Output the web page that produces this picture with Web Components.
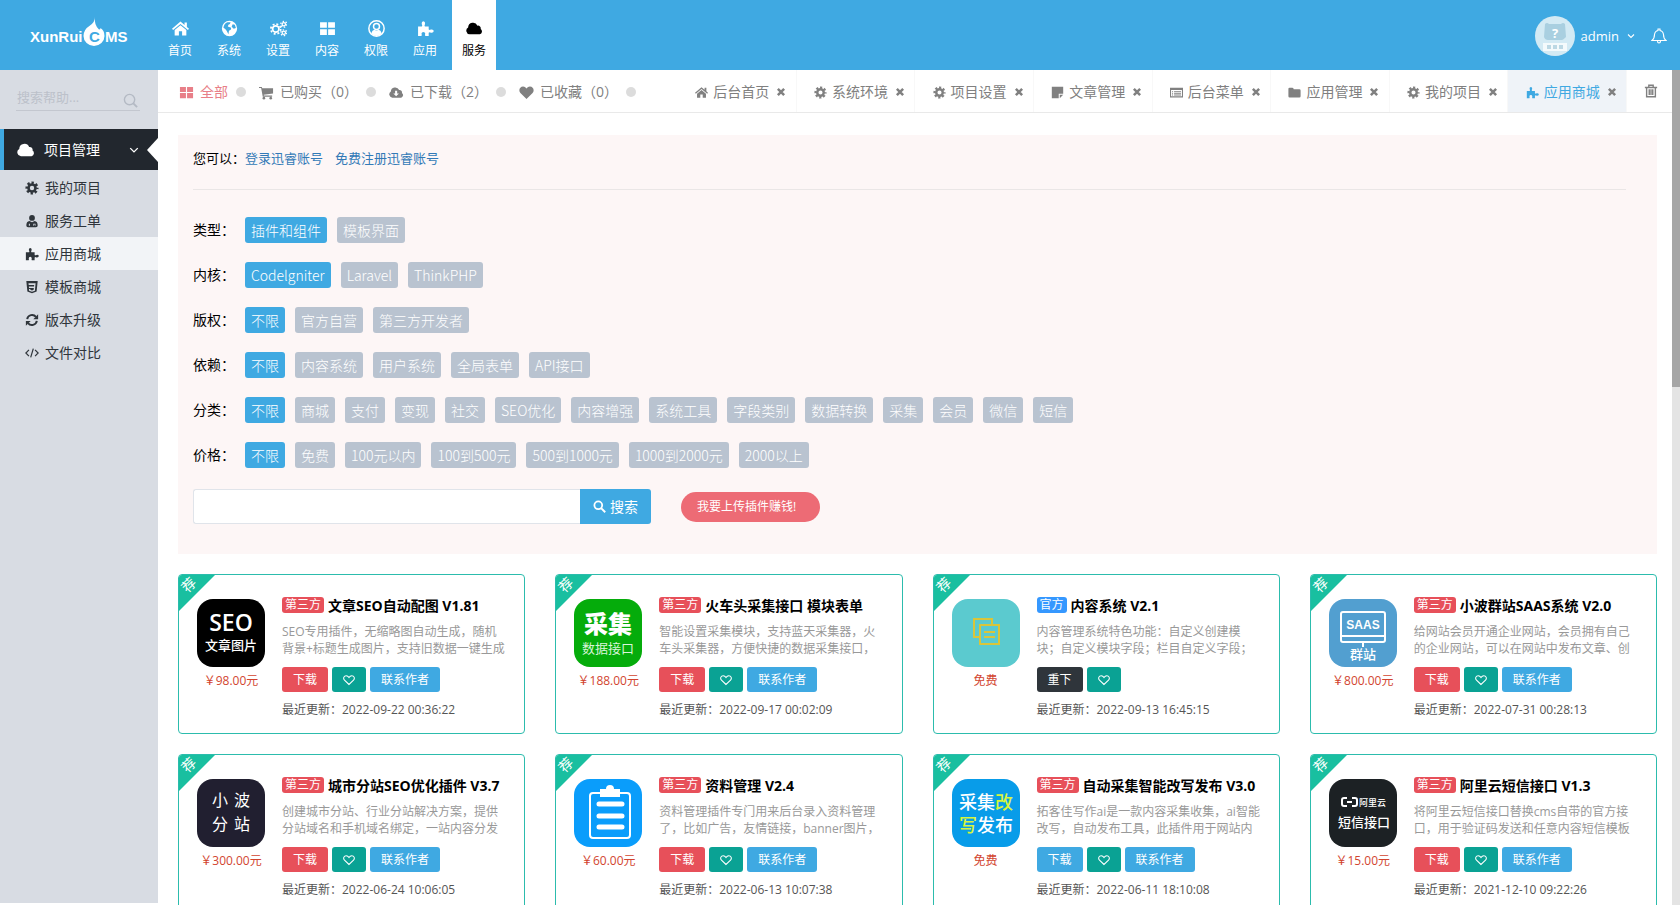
<!DOCTYPE html>
<html lang="zh-CN">
<head>
<meta charset="utf-8">
<title>应用商城</title>
<style>
html, body {
    height: 100%;
}
body {
    margin: 0;
    background: #fff;
    color: #000;
    font: 14px/20px "Open Sans", "Noto Sans CJK SC", sans-serif;
    overflow: hidden;
}
</style>
</head>
<body>
<admin-page>
    <top-bar slot="top" user="admin">
        <top-item icon="home">首页</top-item>
        <top-item icon="globe">系统</top-item>
        <top-item icon="cogs">设置</top-item>
        <top-item icon="grid">内容</top-item>
        <top-item icon="user">权限</top-item>
        <top-item icon="puzzle">应用</top-item>
        <top-item icon="cloud" active>服务</top-item>
    </top-bar>

    <side-bar slot="side" heading="项目管理">
        <side-item icon="cog">我的项目</side-item>
        <side-item icon="doctor">服务工单</side-item>
        <side-item icon="puzzle" active>应用商城</side-item>
        <side-item icon="css">模板商城</side-item>
        <side-item icon="refresh">版本升级</side-item>
        <side-item icon="code">文件对比</side-item>
    </side-bar>

    <tab-bar slot="tabs">
        <quick-link slot="links" icon="grid" active>全部</quick-link>
        <quick-link slot="links" icon="cart">已购买（0）</quick-link>
        <quick-link slot="links" icon="download">已下载（2）</quick-link>
        <quick-link slot="links" icon="heart">已收藏（0）</quick-link>
        <page-tab icon="home">后台首页</page-tab>
        <page-tab icon="cog">系统环境</page-tab>
        <page-tab icon="cog">项目设置</page-tab>
        <page-tab icon="note">文章管理</page-tab>
        <page-tab icon="list">后台菜单</page-tab>
        <page-tab icon="folder">应用管理</page-tab>
        <page-tab icon="cog">我的项目</page-tab>
        <page-tab icon="puzzle" active>应用商城</page-tab>
    </tab-bar>

    <filter-panel>
        <filter-row label="类型：" options="插件和组件,模板界面"></filter-row>
        <filter-row label="内核：" options="Codelgniter,Laravel,ThinkPHP"></filter-row>
        <filter-row label="版权：" options="不限,官方自营,第三方开发者"></filter-row>
        <filter-row label="依赖：" options="不限,内容系统,用户系统,全局表单,API接口"></filter-row>
        <filter-row label="分类：" options="不限,商城,支付,变现,社交,SEO优化,内容增强,系统工具,字段类别,数据转换,采集,会员,微信,短信"></filter-row>
        <filter-row label="价格：" options="不限,免费,100元以内,100到500元,500到1000元,1000到2000元,2000以上"></filter-row>
    </filter-panel>

    <card-grid>
        <plugin-card name="文章SEO自动配图 V1.81" price="￥98.00元" date="2022-09-22 00:36:22">
            <svg slot="art" viewBox="0 0 68 68" style="background:#000" fill="#fff" text-anchor="middle"><text x="34" y="32" font-size="23" font-weight="600">SEO</text><text x="34" y="51" font-size="13" font-weight="500">文章图片</text></svg>
            SEO专用插件，无缩略图自动生成，随机<br>背景+标题生成图片，支持旧数据一键生成
        </plugin-card>
        <plugin-card name="火车头采集接口 模块表单" price="￥188.00元" date="2022-09-17 00:02:09">
            <svg slot="art" viewBox="0 0 68 68" style="background:#05ac0b" fill="#fff" text-anchor="middle"><text x="34" y="34" font-size="24" font-weight="900">采集</text><text x="34" y="54" font-size="13" fill="#d9f5da">数据接口</text></svg>
            智能设置采集模块，支持蓝天采集器，火<br>车头采集器，方便快捷的数据采集接口，
        </plugin-card>
        <plugin-card kind="官方" name="内容系统 V2.1" price="免费" date="2022-09-13 16:45:15" action="重下">
            <svg slot="art" viewBox="0 0 68 68" style="background:#5bcacf" fill="none" stroke="#d9c53a" stroke-width="2"><path d="M27 38h-5V20h18v5M28 26h19v19H28zM32 33h11M32 38h11"/></svg>
            内容管理系统特色功能：自定义创建模<br>块；自定义模块字段；栏目自定义字段；
        </plugin-card>
        <plugin-card name="小波群站SAAS系统 V2.0" price="￥800.00元" date="2022-07-31 00:28:13">
            <svg slot="art" viewBox="0 0 68 68" style="background:#529fd0" fill="#fff" text-anchor="middle"><path d="M12 37V15q0-2 2-2h40q2 0 2 2v26q0 2-2 2H14q-2 0-2-2v-4h44M34 43v5" fill="none" stroke="#fff" stroke-width="2"/><text x="34" y="30" font-size="12" font-weight="700" font-family="Liberation Sans">SAAS</text><text x="34" y="60" font-size="13" font-weight="500">群站</text></svg>
            给网站会员开通企业网站，会员拥有自己<br>的企业网站，可以在网站中发布文章、创
        </plugin-card>
        <plugin-card name="城市分站SEO优化插件 V3.7" price="￥300.00元" date="2022-06-24 10:06:05">
            <svg slot="art" viewBox="0 0 68 68" style="background:#211f30" fill="#fff" text-anchor="middle" font-size="16"><text x="23" y="27">小</text><text x="45" y="27">波</text><text x="23" y="51">分</text><text x="45" y="51">站</text></svg>
            创建城市分站、行业分站解决方案，提供<br>分站域名和手机域名绑定，一站内容分发
        </plugin-card>
        <plugin-card name="资料管理 V2.4" price="￥60.00元" date="2022-06-13 10:07:38">
            <svg slot="art" viewBox="0 0 68 68" style="background:#0a9dfb" fill="none" stroke="#fff"><path d="M26 14h-7q-3 0-3 3v39q0 3 3 3h34q3 0 3-3V17q0-3-3-3h-7" stroke-width="2"/><path d="M26 18v-8h6q0-4 4-4t4 4h6v8z" fill="#fff" stroke="none"/><path d="M25 25h23M25 37h23M25 48h23" stroke-width="5" stroke-linecap="round"/></svg>
            资料管理插件专门用来后台录入资料管理<br>了，比如广告，友情链接，banner图片，
        </plugin-card>
        <plugin-card name="自动采集智能改写发布 V3.0" price="免费" date="2022-06-11 18:10:08" tone="blue">
            <svg slot="art" viewBox="0 0 68 68" style="background:#089ce9" fill="#fff" text-anchor="middle" font-size="18" font-weight="500"><text x="34" y="30">采集<tspan fill="#d8f53c">改</tspan></text><text x="34" y="53"><tspan fill="#d8f53c">写</tspan>发布</text></svg>
            拓客佳写作ai是一款内容采集收集，ai智能<br>改写，自动发布工具，此插件用于网站内
        </plugin-card>
        <plugin-card name="阿里云短信接口 V1.3" price="￥15.00元" date="2021-12-10 09:22:26">
            <svg slot="art" viewBox="0 0 68 68" style="background:#1c2124" fill="#fff"><path d="M18 19h-3q-2 0-2 2v4q0 2 2 2h3M23 19h3q2 0 2 2v4q0 2-2 2h-3M18 23h5" fill="none" stroke="#fff" stroke-width="2"/><text x="30" y="27" font-size="9" font-weight="500">阿里云</text><text x="9" y="48" font-size="13" font-weight="500">短信接口</text></svg>
            将阿里云短信接口替换cms自带的官方接<br>口，用于验证码发送和任意内容短信模板
        </plugin-card>
    </card-grid>
</admin-page>

<script>
const gearTeeth = '<circle cx="8" cy="8" r="6" fill="none" stroke="currentColor" stroke-width="3" stroke-dasharray="2.6 2.112" stroke-dashoffset="1.3"/><circle cx="8" cy="8" r="4" fill="none" stroke="currentColor" stroke-width="3"/>';

const icons = {
    home: '<path d="M8 1.5 0 8.3l1 1.2L8 3.7l7 5.8 1-1.2-2-1.7V2.3h-2.2v2.4zM8 5 2.5 9.5v5h4v-4h3v4h4v-5z"/>',
    globe: '<path fill-rule="evenodd" d="M8 .8a7.2 7.2 0 1 0 0 14.4A7.2 7.2 0 0 0 8 .8zM6 2l3 .2-.6 1.6L7 4.4 6.4 6l3.2 1.2-.4 2L7.5 10l-.5 3.5L5.3 10 4 8.5 2.3 7.2C2.5 4.8 4 2.7 6 2zm5 2 2 .5 1 3-2 .8-2-2z"/>',
    cogs: '<g transform="translate(0 3) scale(.68)"><circle cx="8" cy="8" r="4.4" fill="none" stroke="currentColor" stroke-width="2.4"/><circle cx="8" cy="8" r="6.8" fill="none" stroke="currentColor" stroke-width="2.4" stroke-dasharray="2.7 2.64"/></g><g fill="none" stroke="currentColor"><circle cx="13" cy="4" r="1.6" stroke-width="1.2"/><circle cx="13" cy="4" r="2.8" stroke-width="1.2" stroke-dasharray="1.4 1.53"/><circle cx="13" cy="12" r="1.6" stroke-width="1.2"/><circle cx="13" cy="12" r="2.8" stroke-width="1.2" stroke-dasharray="1.4 1.53"/></g>',
    grid: '<path d="M1 2h6.4v5.4H1zM8.6 2H15v5.4H8.6zM1 8.6h6.4V14H1zM8.6 8.6H15V14H8.6z"/>',
    user: '<circle cx="8" cy="8" r="7.2" fill="none" stroke="currentColor" stroke-width="1.4"/><circle cx="8" cy="6.2" r="2.8" fill="none" stroke="currentColor" stroke-width="1.4"/><path d="M3 12.6q1-3 3-3.4 2 1.4 4 0 2 .4 3 3.4A7 7 0 0 1 8 15a7 7 0 0 1-5-2.4z"/>',
    puzzle: '<path d="M1 6h3.6q.8-1-.2-2.2Q4.200 1.400 6 1.200q1.900.200 1.600 2.600Q6.600 5 7.400 6H11v3q1 .8 2 0 2.400-.6 2.800 1.400-.4 2-2.800 1.500-1-.9-2 0V15H7.800q-.6-1.200 0-2-.2-1.800-1.800-1.800T4.200 13q.6.800 0 2H1z"/>',
    cloud: '<path d="M3.500 13.500A3.500 3.500 0 0 1 2 7a4.600 4.600 0 0 1 8.800-1.700 2.600 2.600 0 0 1 3 3.200 2.800 2.800 0 0 1-.8 5z"/>',
    download: '<path fill-rule="evenodd" d="M3.500 13.500A3.500 3.500 0 0 1 2 7a4.600 4.600 0 0 1 8.800-1.700 2.600 2.600 0 0 1 3 3.200 2.800 2.800 0 0 1-.8 5zM6.500 6v3H4.600L7.600 12l3-3H8.700V6z"/>',
    cog: gearTeeth,
    doctor: '<circle cx="8" cy="4.500" r="3.300"/><path fill-rule="evenodd" d="M5 8 8 9.500 11 8q3.500.6 3.500 5 0 2-2 2h-9q-2 0-2-2Q1.500 8.600 5 8zm-.6 3v2.500h1.200V11zM9.500 11v2.500h.8v-1.500h.9v1.500h.8V11z"/>',
    css: '<path fill-rule="evenodd" d="M1.500 1h13l-1.200 12L8 15l-5.300-2zM4 3.800l.2 2h6.300l-.2 1.600H4.400l.2 1.800h5.500l-.2 2-1.900.7-1.900-.7-.1-.9H4.500l.2 2L8 13.500l3.300-1.200.8-8.500z"/>',
    refresh: '<path d="M2.500 7A5.600 5.600 0 0 1 12.500 4.500M13.500 9A5.600 5.600 0 0 1 3.500 11.500" fill="none" stroke="currentColor" stroke-width="2.200"/><path d="M15 1.500V7H9.500zM1 14.500V9h5.500z"/>',
    code: '<path d="M4.500 4.500 1 8l3.500 3.500M11.500 4.500 15 8l-3.500 3.500M9.500 3l-3 10" fill="none" stroke="currentColor" stroke-width="1.400"/>',
    cart: '<path d="M0 2h3l.5 1.500H15V9L5 10.300l.2 1H14v1.200H4L2.300 3.300H0z"/><circle cx="5.200" cy="14" r="1.400"/><circle cx="12.500" cy="14" r="1.400"/>',
    heart: '<path d="M8 14.800 1.500 8.500C-1 5.500 1 1.500 4.300 1.500 6.300 1.500 7.400 2.800 8 3.800c.6-1 1.700-2.300 3.700-2.300 3.300 0 5.300 4 2.800 7z"/>',
    hearto: '<path d="M8 14 2 8.200C-.4 5.400 1.500 2.300 4.300 2.300 6.300 2.300 7.400 3.800 8 4.800c.6-1 1.700-2.500 3.700-2.500 2.800 0 4.700 3.100 2.300 5.900z" fill="none" stroke="currentColor" stroke-width="1.400"/>',
    note: '<path d="M1 1h14v8.500H9.500V15H1zM10.800 10.800H15L10.800 15z"/>',
    list: '<path fill-rule="evenodd" d="M0 2h16v12H0zm1.300 3v7.700h13.400V5z"/><path d="M2.500 6h1.300v1.200H2.500zM5 6h8.500v1.200H5zM2.500 8.300h1.300v1.200H2.500zM5 8.300h8.500v1.200H5zM2.500 10.600h1.300v1.200H2.500zM5 10.600h8.500v1.200H5z"/>',
    folder: '<path d="M.5 3.500Q.5 2 2 2h3.500Q7 2 7 4h7q1.500 0 1.500 1.500v7Q15.500 14 14 14H2q-1.500 0-1.500-1.500z"/>',
    times: '<path d="m3 3 10 10M13 3 3 13" fill="none" stroke="currentColor" stroke-width="4"/>',
    trash: '<path d="M1 4h14M5.500 4V1.500h5V4M3 4v10.500h10V4M6 6v6.500M8 6v6.500M10 6v6.500" fill="none" stroke="currentColor" stroke-width="1.600"/>',
    search: '<circle cx="6.500" cy="6.500" r="4.800" fill="none" stroke="currentColor" stroke-width="2.200"/><path d="m10 10 5 5" stroke="currentColor" stroke-width="2.400"/>',
    lens: '<circle cx="7" cy="7" r="5.500" fill="none" stroke="currentColor" stroke-width="1.500"/><path d="m11 11 4 4" stroke="currentColor" stroke-width="2"/>',
    down: '<path d="m2 5 6 6 6-6" fill="none" stroke="currentColor" stroke-width="2.200"/>',
    bell: '<path d="M1 12.500q2.500-2 2.500-6Q4 3 7 2.500V1h2v1.500q3 .5 3.500 4 0 4 2.500 6zM6.500 13q0 2 1.500 2t1.500-2" fill="none" stroke="currentColor" stroke-width="1.100"/>'
};

function icon(name, size = 14) {
    return `<svg width="${size}" height="${size}" viewBox="0 0 16 16" fill="currentColor" aria-hidden="true">${icons[name]}</svg>`;
}

// every element renders its markup once, from its attributes
class BaseElement extends HTMLElement {
    constructor() {
        super();
        this.root = this.attachShadow({ mode: 'open' });
    }

    connectedCallback() {
        this.root.innerHTML = `<style>
            * { box-sizing: border-box; }
            a { color: inherit; text-decoration: none; }
            button, input { font: inherit; color: inherit; border: 0; margin: 0; padding: 0; background: none; }
            button { cursor: pointer; }
            svg { flex: none; }
        </style>` + this.render();
    }
}

class AdminPage extends BaseElement {
    render() {
        return `<style>
            :host { display: flex; flex-direction: column; height: 100vh; }
            .body { display: flex; flex: 1; min-height: 0; }
            .main { flex: 1; min-width: 0; display: flex; flex-direction: column; }
            main { flex: 1; min-height: 0; overflow: hidden; padding: 22px 15px 0 20px; }
            .scroll { width: 8px; background: #e4e4e4; }
            .thumb { height: 38%; background: #a6a6a6; }
        </style>
        <slot name="top"></slot>
        <div class="body">
            <slot name="side"></slot>
            <div class="main">
                <slot name="tabs"></slot>
                <main><slot></slot></main>
            </div>
            <div class="scroll"><div class="thumb"></div></div>
        </div>`;
    }
}

class TopBar extends BaseElement {
    render() {
        return `<style>
            :host { display: flex; height: 70px; flex: none; background: #3fa9e2; color: #fff; }
            .logo { width: 158px; flex: none; padding: 16px 0 0 30px; }
            nav { display: flex; gap: 5px; flex: 1; }
            .user { display: flex; align-items: center; padding: 2px 13px 0 0; font-size: 13px; }
            .user button { display: flex; align-items: center; gap: 6px; }
            .user button + button { margin-left: 16px; }
            .user span { margin-right: 2px; }
        </style>
        <a class="logo" href="#" aria-label="XunRuiCMS">
            <svg width="100" height="32" viewBox="0 0 100 32" fill="#fff" font-family="Liberation Sans" font-weight="700" font-size="15">
                <text x="0" y="26">XunRui</text>
                <path d="M65 1q0 5-5 8.500-6.500 4-6.500 10.500a10.500 10 0 0 0 21 0q0-5.500-4-8 .2 1.500-1.500 1.500Q64 9 65 1z"/>
                <text x="59" y="26" fill="#3fa9e2">C</text>
                <text x="75" y="26">MS</text>
            </svg>
        </a>
        <nav><slot></slot></nav>
        <div class="user">
            <button>
                <svg width="40" height="40" viewBox="0 0 40 40">
                    <circle cx="20" cy="20" r="20" fill="#d3eaf4"/>
                    <path d="M10 8q2-2 4 0h12q2-2 4 0l1 13q-3 3-4 3H13q-3 0-4-3z" fill="#a9cfe0"/>
                    <text x="20" y="22" font-size="13" font-weight="700" fill="#fff" text-anchor="middle">?</text>
                    <path d="M8 27h24v8H8z" fill="#f4fafc"/>
                    <path d="M12 29h4v4h-4zM18 29h4v4h-4zM24 29h4v4h-4z" fill="#bcd8e4"/>
                </svg>
                <span>${this.getAttribute('user')}</span>${icon('down', 8)}
            </button>
            <button aria-label="通知">${icon('bell', 16)}</button>
        </div>`;
    }
}

class TopItem extends BaseElement {
    render() {
        return `<style>
            a { display: flex; flex-direction: column; align-items: center; gap: 4px; height: 70px; padding: 20px 10px 0; font-size: 12px; }
            :host([active]) a { background: #fff; color: #000; }
        </style>
        <a href="#">${icon(this.getAttribute('icon'), 17)}<slot></slot></a>`;
    }
}

class SideBar extends BaseElement {
    render() {
        return `<style>
            :host { display: block; width: 158px; flex: none; margin-bottom: 2px; background: #d8dce3; color: #2f353b; }
            form { display: flex; align-items: center; margin: 14px 18px 18px 16px; height: 27px; border-bottom: 1px solid #c3c7cf; color: #b4bac4; }
            input { flex: 1; min-width: 0; padding-left: 1px; font-size: 13px; outline: 0; }
            input::placeholder { color: #bcc1ca; opacity: 1; }
            form button { display: flex; margin: 6px 2px 0 0; }
            .head { display: flex; align-items: center; gap: 9px; width: 100%; height: 41px; padding-left: 13px; border-left: 4px solid #3fa9e2; background: #22272e; color: #fff; }
            .head span { flex: 1; text-align: left; }
            .arrow { border: 12px solid transparent; border-left: 0; border-right: 11px solid #fff; margin-left: -1px; }
            nav { padding-top: 1px; }
        </style>
        <form>
            <input type="text" placeholder="搜索帮助..." aria-label="搜索帮助">
            <button type="button" aria-label="搜索">${icon('lens', 15)}</button>
        </form>
        <button class="head">${icon('cloud', 18)}<span>${this.getAttribute('heading')}</span>${icon('down', 10)}<i class="arrow"></i></button>
        <nav><slot></slot></nav>`;
    }
}

class SideItem extends BaseElement {
    render() {
        return `<style>
            a { display: flex; align-items: center; gap: 6px; height: 33px; padding: 1px 0 0 25px; }
            :host([active]) a { background: #f2f4f7; }
        </style>
        <a href="#">${icon(this.getAttribute('icon'), 14)}<slot></slot></a>`;
    }
}

class TabBar extends BaseElement {
    render() {
        return `<style>
            :host { display: flex; flex: none; height: 43px; box-sizing: border-box; border-bottom: 1px solid #e9e9e9; color: #808080; }
            .links { display: flex; flex: 1; padding-left: 21px; }
            .tabs { display: grid; grid-template-columns: repeat(8, 1fr); flex: 0 1 949px; }
            .trash { width: 45px; padding: 4px 0 0 3px; }
        </style>
        <nav class="links"><slot name="links"></slot></nav>
        <nav class="tabs"><slot></slot></nav>
        <button class="trash" aria-label="关闭全部">${icon('trash', 14)}</button>`;
    }
}

class QuickLink extends BaseElement {
    render() {
        return `<style>
            :host { display: flex; align-items: center; padding-top: 2px; }
            :host([active]) a { color: #e87f88; }
            a { display: flex; align-items: center; gap: 6px; }
            i { width: 10px; height: 10px; margin: 0 13px 0 8px; border-radius: 50%; background: #dcdcdc; }
        </style>
        <a href="#">${icon(this.getAttribute('icon'), 15)}<slot></slot></a><i></i>`;
    }
}

class PageTab extends BaseElement {
    render() {
        return `<style>
            :host { display: flex; align-items: center; justify-content: center; gap: 7px; padding: 2px 0 0 8px; border-right: 1px solid #f8f8f8; }
            :host([active]) { background: #eff3f8; }
            :host([active]) a { color: #3fa9e2; }
            a { display: flex; align-items: center; gap: 5px; }
            button { display: flex; }
        </style>
        <a href="#">${icon(this.getAttribute('icon'), 13)}<slot></slot></a>
        <button aria-label="关闭">${icon('times', 10)}</button>`;
    }
}

class FilterPanel extends BaseElement {
    render() {
        return `<style>
            :host { display: block; padding: 13px 15px 30px; margin-bottom: 20px; background: #fdf6f6; }
            p { margin: 0; font-size: 13px; }
            p a { color: #337ab7; margin-right: 12px; }
            hr { margin: 21px 16px 27px 0; border: 0; border-top: 1px solid #eae6e6; }
            form { display: flex; align-items: center; margin-top: 21px; }
            input { width: 387px; height: 35px; padding: 0 12px; border: 1px solid #e0e4ea; border-right: 0; border-radius: 3px 0 0 3px; background: #fff; }
            .search { display: flex; align-items: center; gap: 4px; height: 35px; padding: 0 13px; border-radius: 0 3px 3px 0; background: #3fa9e2; color: #fff; }
            .upload { margin-left: 30px; padding: 5px 24px 5px 16px; border-radius: 15px; background: #ed6b75; color: #fff; font-size: 12px; }
            .rows { display: flex; flex-direction: column; gap: 19px; }
        </style>
        <p>您可以：<a href="#">登录迅睿账号</a><a href="#">免费注册迅睿账号</a></p>
        <hr>
        <div class="rows"><slot></slot></div>
        <form>
            <input type="text" aria-label="关键字">
            <button type="button" class="search">${icon('search', 13)}搜索</button>
            <a class="upload" href="#">我要上传插件赚钱!</a>
        </form>`;
    }
}

class FilterRow extends BaseElement {
    render() {
        const tags = this.getAttribute('options').split(',')
            .map((text, i) => `<a href="#" class="${i ? '' : 'on'}">${text}</a>`).join('');
        return `<style>
            :host { display: flex; align-items: center; }
            .label { width: 52px; }
            .tags { display: flex; flex-wrap: wrap; gap: 10px; font-family: "Noto Sans CJK SC", sans-serif; font-weight: 300; }
            a { height: 26px; padding: 0 6px; line-height: 26px; border-radius: 3px; background: #b9c3d0; color: #fff; }
            a.on { background: #3fa9e2; }
        </style>
        <span class="label">${this.getAttribute('label')}</span>
        <div class="tags">${tags}</div>`;
    }
}

class CardGrid extends BaseElement {
    render() {
        return `<style>
            :host { display: grid; grid-template-columns: repeat(4, 1fr); gap: 20px 30px; }
        </style>
        <slot></slot>`;
    }
}

class PluginCard extends BaseElement {
    render() {
        const official = this.getAttribute('kind') === '官方';
        const tone = official ? 'dark' : this.getAttribute('tone') || 'red';
        return `<style>
            :host { position: relative; display: flex; gap: 17px; height: 160px; padding: 22px 14px 0 18px; border: 1px solid #2cbcad; border-radius: 4px; box-sizing: border-box; font-size: 12px; line-height: 17px; }
            .ribbon { position: absolute; left: 0; top: 0; padding: 3px; color: #fff; font-size: 14px; line-height: 14px; }
            .ribbon svg { position: absolute; left: 0; top: 0; }
            .ribbon span { position: relative; display: block; width: 14px; height: 14px; transform: rotate(-45deg); }
            .left { width: 68px; flex: none; display: flex; flex-direction: column; align-items: center; padding-top: 2px; gap: 5px; white-space: nowrap; color: #d2452f; }
            ::slotted(svg) { width: 68px; height: 68px; border-radius: 16px; }
            .right { flex: 1; min-width: 0; white-space: nowrap; }
            h3 { display: flex; align-items: center; gap: 4px; margin: 0; height: 16px; font-size: 14px; font-weight: 700; }
            .kind { padding: 0 3px; border-radius: 3px; background: #e7505a; color: #fff; font-size: 12px; line-height: 16px; font-weight: 400; }
            .kind.official { background: #3598ff; }
            p { margin: 10px 0; color: #999; }
            .buttons { display: flex; gap: 4px; }
            .buttons button { display: flex; align-items: center; height: 25px; padding: 0 11px; border-radius: 3px; color: #fff; }
            button.red { background: #e7505a; }
            button.dark { background: #2f353b; }
            button.blue { background: #3fa9e2; }
            button.like { background: #0aa294; }
            .date { margin-top: 9px; color: #555; }
        </style>
        <div class="ribbon">
            <svg width="36" height="36" viewBox="0 0 36 36" fill="#19bfa0"><path d="M3 0h33L0 36V3q0-3 3-3z"/></svg>
            <span>荐</span>
        </div>
        <div class="left"><slot name="art"></slot><span>${this.getAttribute('price')}</span></div>
        <div class="right">
            <h3><span class="kind ${official ? 'official' : ''}">${this.getAttribute('kind') || '第三方'}</span>${this.getAttribute('name')}</h3>
            <p><slot></slot></p>
            <div class="buttons">
                <button class="${tone}">${this.getAttribute('action') || '下载'}</button>
                <button class="like" aria-label="收藏">${icon('hearto', 12)}</button>
                ${official ? '' : '<button class="blue">联系作者</button>'}
            </div>
            <div class="date">最近更新：${this.getAttribute('date')}</div>
        </div>`;
    }
}

customElements.define('admin-page', AdminPage);
customElements.define('top-bar', TopBar);
customElements.define('top-item', TopItem);
customElements.define('side-bar', SideBar);
customElements.define('side-item', SideItem);
customElements.define('tab-bar', TabBar);
customElements.define('quick-link', QuickLink);
customElements.define('page-tab', PageTab);
customElements.define('filter-panel', FilterPanel);
customElements.define('filter-row', FilterRow);
customElements.define('card-grid', CardGrid);
customElements.define('plugin-card', PluginCard);
</script>
</body>
</html>
